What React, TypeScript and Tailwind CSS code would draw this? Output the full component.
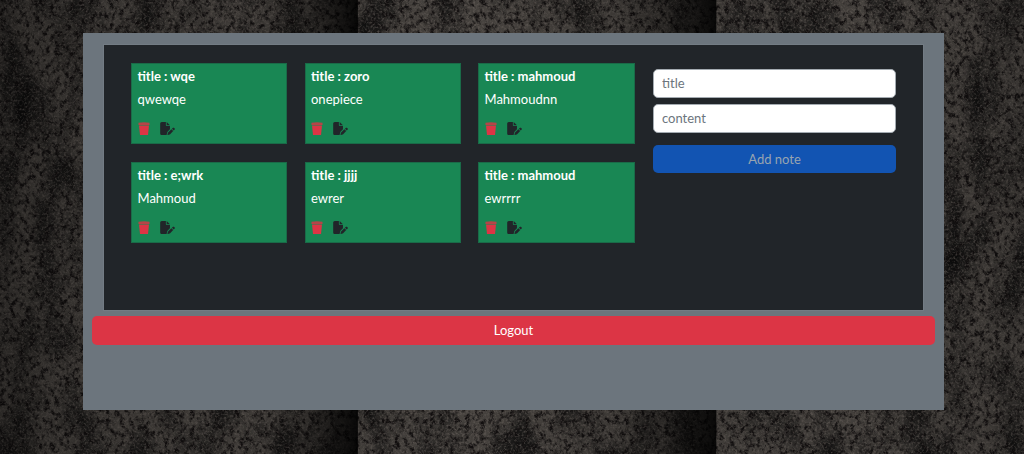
import { FaFilePen } from 'react-icons/fa6';

const notes = [
  { title: 'wqe', content: 'qwewqe' },
  { title: 'zoro', content: 'onepiece' },
  { title: 'mahmoud', content: 'Mahmoudnn' },
  { title: 'e;wrk', content: 'Mahmoud' },
  { title: 'jjjj', content: 'ewrer' },
  { title: 'mahmoud', content: 'ewrrrr' },
];

// rock wall texture behind the panel
function WallTexture() {
  return (
    <svg className="absolute inset-0 h-full w-full" width="1024" height="454" aria-hidden="true">
      <defs>
        <filter id="speckle" x="0" y="0" width="100%" height="100%" colorInterpolationFilters="sRGB">
          <feTurbulence type="fractalNoise" baseFrequency="0.2 0.16" numOctaves="4" seed="7" />
          <feColorMatrix values="0 0 0 0 0.07  0 0 0 0 0.06  0 0 0 0 0.06  3.6 0 0 0 -1.6" />
        </filter>
        <filter id="grit" x="0" y="0" width="100%" height="100%" colorInterpolationFilters="sRGB">
          <feTurbulence type="fractalNoise" baseFrequency="0.45" numOctaves="2" seed="21" />
          <feColorMatrix values="0 0 0 0 0.42  0 0 0 0 0.39  0 0 0 0 0.37  1.6 0 0 0 -0.72" />
        </filter>
        <filter id="patches" x="0" y="0" width="100%" height="100%" colorInterpolationFilters="sRGB">
          <feTurbulence type="fractalNoise" baseFrequency="0.03 0.014" numOctaves="3" seed="3" />
          <feColorMatrix values="0 0 0 0 0.05  0 0 0 0 0.05  0 0 0 0 0.05  2.4 0 0 0 -1" />
        </filter>
        <linearGradient id="bands" x1="0" x2="1" y1="0" y2="0">
          <stop offset="0" stopColor="#000" stopOpacity="0.4" />
          <stop offset="0.08" stopColor="#000" stopOpacity="0.22" />
          <stop offset="0.25" stopColor="#000" stopOpacity="0.12" />
          <stop offset="0.3" stopColor="#000" stopOpacity="0.35" />
          <stop offset="0.349" stopColor="#000" stopOpacity="0.88" />
          <stop offset="0.35" stopColor="#000" stopOpacity="0.1" />
          <stop offset="0.45" stopColor="#000" stopOpacity="0" />
          <stop offset="0.6" stopColor="#000" stopOpacity="0.15" />
          <stop offset="0.65" stopColor="#000" stopOpacity="0.4" />
          <stop offset="0.699" stopColor="#000" stopOpacity="0.88" />
          <stop offset="0.7" stopColor="#000" stopOpacity="0.1" />
          <stop offset="0.85" stopColor="#000" stopOpacity="0.05" />
          <stop offset="1" stopColor="#000" stopOpacity="0.2" />
        </linearGradient>
      </defs>
      <rect width="1024" height="454" fill="#46423e" />
      <rect width="1024" height="454" filter="url(#patches)" />
      <rect width="1024" height="454" filter="url(#speckle)" />
      <rect width="1024" height="454" filter="url(#grit)" />
      <rect width="1024" height="454" fill="url(#bands)" />
    </svg>
  );
}

function TrashIcon() {
  return (
    <svg className="h-[13px] w-[12px] text-[#dc3545]" viewBox="0 0 12 13" fill="currentColor">
      <path d="M0.5 0.8 Q6 -0.4 11.5 0.8 V3 H0.5 Z" opacity="0.8" />
      <path d="M1 3.6 H11 L10 13 H2 Z" />
    </svg>
  );
}

function NoteCard({ title, content }: { title: string; content: string }) {
  return (
    <div className="h-[81px] border border-[#1a6b48] bg-[#198754] px-[5.5px] text-white">
      <h3 className="mt-[5px] text-[13px] font-bold leading-[15px]">title : {title}</h3>
      <p className="mt-[6px] text-[13px] leading-[19px]">{content}</p>
      <div className="mt-[13px] flex items-center gap-[10px]">
        <TrashIcon />
        <FaFilePen className="h-[13px] w-[15px] text-[#212529]" />
      </div>
    </div>
  );
}

export default function App() {
  return (
    <div className="relative h-[454px] w-[1024px] overflow-hidden font-['Lato','Noto_Sans',sans-serif]">
      <WallTexture />
      <div className="relative ml-[83px] mt-[33px] h-[377px] w-[861px] bg-[#6c757d]">
        <div className="ml-[20px] flex h-[267px] w-[821px] translate-y-[11px] border border-[#737c84] bg-[#212529] pl-[27px] pt-[18px]">
          <div className="grid w-[504px] grid-cols-[156px_156px_157px] content-start gap-x-[17.5px] gap-y-[18px]">
            {notes.map((note, i) => (
              <NoteCard key={i} title={note.title} content={note.content} />
            ))}
          </div>
          <div className="ml-[18px] mt-[6px] flex w-[243px] flex-col">
            <input
              placeholder="title"
              className="h-[29px] rounded-[5px] border border-[#a4abb1] bg-white px-[8px] pb-[2px] text-[13px] outline-none placeholder:text-[#6c757d]"
            />
            <input
              placeholder="content"
              className="mt-[6px] h-[29px] rounded-[5px] border border-[#a4abb1] bg-white px-[8px] pb-[2px] text-[13px] outline-none placeholder:text-[#6c757d]"
            />
            <button className="mt-[12px] h-[28px] rounded-[5px] bg-[#1254b2] pt-[1px] text-[13px] text-[#98a4b0]">
              Add note
            </button>
          </div>
        </div>
        <button className="ml-[9px] mt-[16px] h-[29px] w-[843px] rounded-[5px] bg-[#dc3545] text-[13px] text-white">
          Logout
        </button>
      </div>
    </div>
  );
}
